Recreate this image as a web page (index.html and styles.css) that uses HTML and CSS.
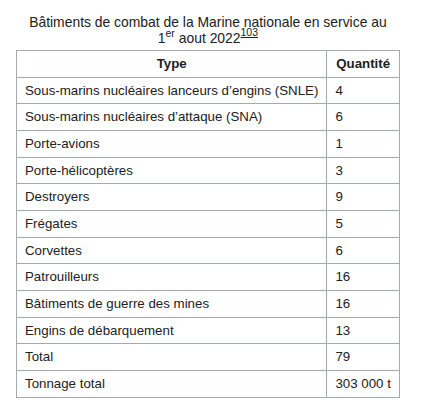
FILE: index.html
```html
<!DOCTYPE html>
<html lang="fr">
<head>
<meta charset="utf-8">
<link rel="stylesheet" href="styles.css">
</head>
<body>
<table class="wikitable">
<caption>Bâtiments de combat de la Marine nationale en service au<br>1<sup>er</sup> aout 2022<sup class="ref"><a href="#">103</a></sup></caption>
<thead>
<tr><th>Type</th><th>Quantité</th></tr>
</thead>
<tbody>
<tr><td>Sous-marins nucléaires lanceurs d’engins (SNLE)</td><td>4</td></tr>
<tr><td>Sous-marins nucléaires d’attaque (SNA)</td><td>6</td></tr>
<tr><td>Porte-avions</td><td>1</td></tr>
<tr><td>Porte-hélicoptères</td><td>3</td></tr>
<tr><td>Destroyers</td><td>9</td></tr>
<tr><td>Frégates</td><td>5</td></tr>
<tr><td>Corvettes</td><td>6</td></tr>
<tr><td>Patrouilleurs</td><td>16</td></tr>
<tr><td>Bâtiments de guerre des mines</td><td>16</td></tr>
<tr><td>Engins de débarquement</td><td>13</td></tr>
<tr><td>Total</td><td>79</td></tr>
<tr><td>Tonnage total</td><td>303 000 t</td></tr>
</tbody>
</table>
</body>
</html>
```
FILE: styles.css
```css
html, body {
  margin: 0;
  padding: 0;
  background: #fff;
}
body {
  font-family: "Liberation Sans", Arial, sans-serif;
  color: #202122;
  padding: 12px 0 0 16px;
}
.wikitable {
  border-collapse: collapse;
  font-size: 13.3px;
}
.wikitable caption {
  font-size: 13.9px;
  line-height: 16px;
  padding: 2px 0 4px;
  text-align: center;
  white-space: nowrap;
}
.wikitable caption sup {
  font-size: 10.5px;
  line-height: 0;
  vertical-align: 6px;
}
.wikitable caption .ref {
  vertical-align: 7px;
}
.wikitable .ref a {
  color: #202122;
  text-decoration: underline;
}
.wikitable th,
.wikitable td {
  border: 1px solid #a2a9b1;
  padding: 3px 8px;
  line-height: 19.67px;
  text-align: left;
}
.wikitable th {
  text-align: center;
  font-weight: bold;
}
```
